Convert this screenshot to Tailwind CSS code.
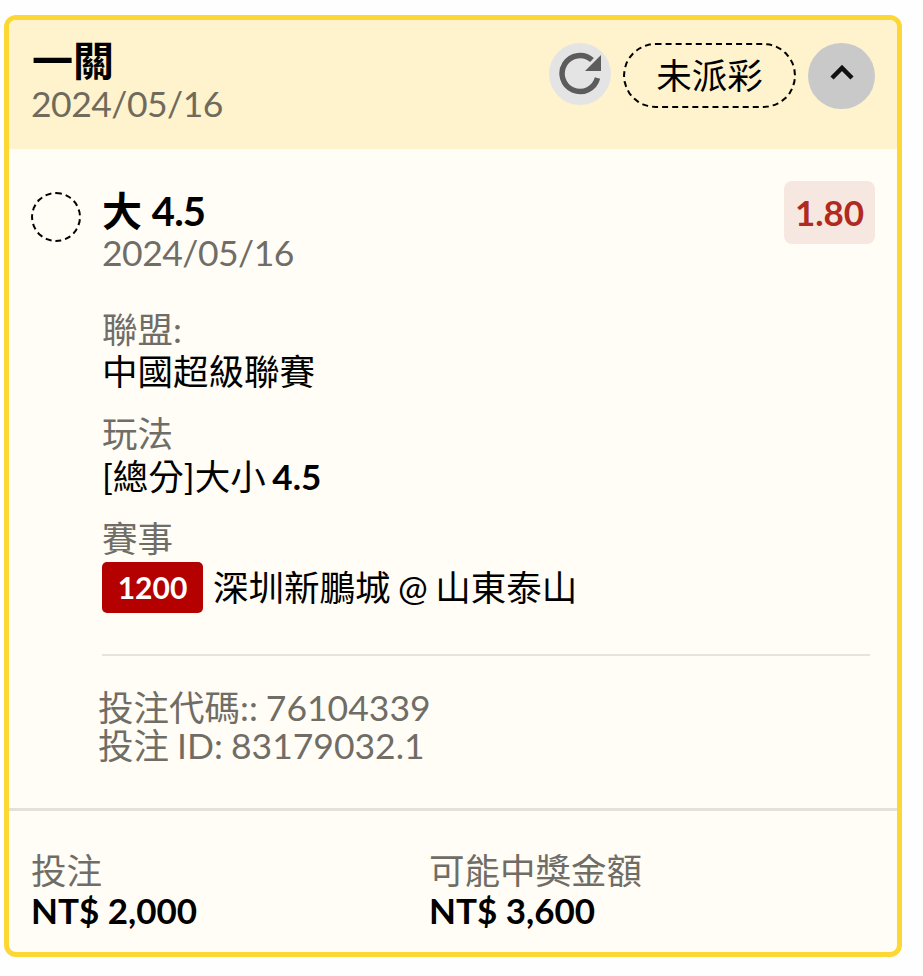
<!DOCTYPE html>
<html lang="zh-Hant">
<head>
  <meta charset="UTF-8" />
  <meta name="viewport" content="width=device-width, initial-scale=1.0"/>
  <title>Bet slip</title>
  <script src="https://cdn.jsdelivr.net/npm/@tailwindcss/browser@4"></script>
</head>
<body class="bg-[#fefefe] font-['Lato','Noto_Sans_CJK_TC',sans-serif] text-black">
  <div class="pt-[15px] pl-[4px]">
    <div class="w-[898px] h-[942px] border-[5px] border-[#fdd835] rounded-[12px] bg-[#fffdf6] overflow-hidden flex flex-col">

      <!-- header -->
      <div class="h-[129px] shrink-0 bg-[#fef3cd] pl-[23px] pr-[22px] pt-[20px] flex justify-between items-start">
        <div>
          <div class="text-[41px] leading-[42px] font-bold">一關</div>
          <div class="-ml-[1px] mt-[2px] text-[35.5px] leading-[40px] tracking-[-0.5px] text-[#6f6a5c]">2024/05/16</div>
        </div>
        <div class="flex items-start mt-[3px]">
          <div class="w-[62px] h-[62px] rounded-full bg-[#e4e4e4] flex items-center justify-center">
            <svg width="44" height="44" viewBox="0 0 44 44">
              <path d="M39.500 26A18 18 0 1 1 34 8" fill="none" stroke="#5c5c5c" stroke-width="5.500"/>
              <path d="M43 3v16H27z" fill="#5c5c5c"/>
            </svg>
          </div>
          <div class="ml-[12px] w-[173px] h-[65px] rounded-full border-2 border-dashed border-black flex items-center justify-center text-[35.5px]">未派彩</div>
          <div class="ml-[12px] w-[67px] h-[66px] rounded-full bg-[#c9c9c9] flex items-center justify-center">
            <svg class="mb-[6px]" width="28" height="18" viewBox="0 0 28 18"><path d="M4 14l10-10 10 10" fill="none" stroke="#111" stroke-width="4.500"/></svg>
          </div>
        </div>
      </div>

      <!-- selection -->
      <div class="flex-1 pl-[22px] pr-[22px] pt-[32px]">
        <div class="flex items-start">
          <div class="mt-[11px] w-[50px] h-[50px] rounded-full border-2 border-dashed border-black shrink-0"></div>
          <div class="ml-[21px] mt-[8px] flex-1">
            <div class="text-[40px] leading-[44px] font-bold">大 <span class="tracking-[-0.8px]">4.5</span></div>
            <div class="mt-[1px] text-[35.5px] leading-[38px] tracking-[-0.5px] text-[#6f6d66]">2024/05/16</div>
          </div>
          <div class="w-[91px] h-[63px] rounded-[8px] bg-[#f6e7e0] flex items-center justify-center text-[35px] font-bold text-[#b02a1e]">1.80</div>
        </div>

        <div class="ml-[71px] mt-[37px]">
          <div class="text-[35.5px] leading-[42px] text-[#6f6d66]">聯盟:</div>
          <div class="text-[35.5px] leading-[42px]">中國超級聯賽</div>
          <div class="mt-[20px] text-[35.5px] leading-[42px] text-[#6f6d66]">玩法</div>
          <div class="text-[35.5px] leading-[42px] [word-spacing:-2.5px]">[總分]大小 <span class="font-bold text-[35px]">4.5</span></div>
          <div class="mt-[20px] text-[35.5px] leading-[42px] text-[#6f6d66]">賽事</div>
          <div class="flex items-center mt-[2px]">
            <span class="w-[101px] h-[51px] rounded-[5px] bg-[#b50000] text-white font-bold text-[30px] flex items-center justify-center">1200</span>
            <span class="ml-[10px] text-[35.5px] leading-[51px] [word-spacing:-1.5px]">深圳新鵬城 @ 山東泰山</span>
          </div>
        </div>

        <div class="ml-[71px] mr-[5px] mt-[41px] border-t-2 border-[#e6e4dc]"></div>

        <div class="ml-[67px] mt-[33px] text-[35.5px] leading-[38px] text-[#6f6d66] [word-spacing:-1px]">
          <div>投注代碼:: 76104339</div>
          <div>投注 ID: 83179032.1</div>
        </div>
      </div>

      <!-- totals -->
      <div class="h-[144px] shrink-0 border-t-[3px] border-[#e3e1da] pl-[22px] pt-[40px] flex">
        <div class="w-[398px]">
          <div class="text-[35.5px] leading-[40px] text-[#6f6d66]">投注</div>
          <div class="text-[35px] leading-[38px] font-bold">NT$ 2,000</div>
        </div>
        <div>
          <div class="text-[35.5px] leading-[40px] text-[#6f6d66]">可能中獎金額</div>
          <div class="text-[35px] leading-[38px] font-bold">NT$ 3,600</div>
        </div>
      </div>
    </div>
  </div>
</body>
</html>
